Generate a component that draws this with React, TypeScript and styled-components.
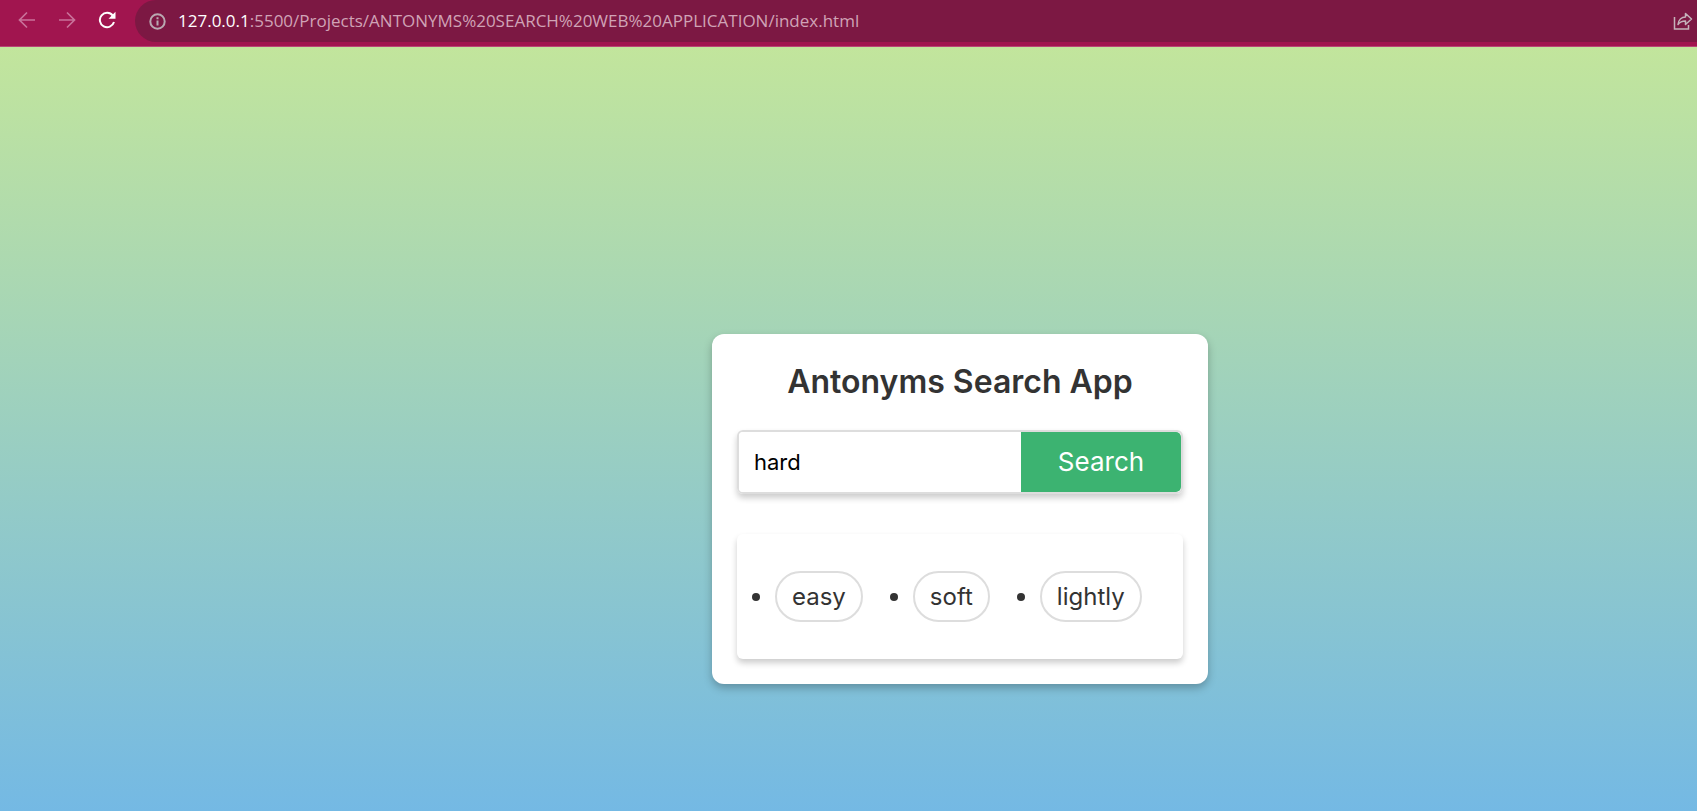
import React, { useState } from "react";
import styled, { createGlobalStyle } from "styled-components";

const GlobalStyle = createGlobalStyle`
  * { box-sizing: border-box; }
  body { margin: 0; }
`;

const Page = styled.div`
  min-height: 100vh;
  display: flex;
  flex-direction: column;
  overflow: hidden;
`;

const BrowserBar = styled.header`
  display: flex;
  align-items: flex-start;
  height: 47px;
  background: #a1154f;
  border-bottom: 1px solid #b84576;
`;

const NavButtons = styled.nav`
  display: flex;
  width: 135px;
  height: 40px;
  padding-left: 7px;
`;

const IconButton = styled.button<{ $dim?: boolean }>`
  display: flex;
  align-items: center;
  justify-content: center;
  width: 40px;
  height: 40px;
  padding: 0;
  border: 0;
  background: none;
  color: ${(p) => (p.$dim ? "#c9729a" : "#ffffff")};
`;

const ShareButton = styled(IconButton)`
  width: 28px;
  color: #c5b2bb;
`;

const AddressBar = styled.div`
  display: flex;
  align-items: center;
  flex: 1;
  height: 42px;
  padding-left: 14px;
  border-radius: 21px 0 0 21px;
  background: #7c1843;
  color: #b9a9b1;
`;

const Url = styled.a`
  flex: 1;
  margin-left: 12px;
  color: #d0a3b6;
  font: 17px/24px "Open Sans", "Noto Sans", sans-serif;
  text-decoration: none;
  white-space: nowrap;
`;

const Host = styled.span`
  color: #ffffff;
`;

const Main = styled.main`
  flex: 1;
  display: flex;
  justify-content: center;
  align-items: flex-start;
  padding: 287px 0 80px 223px;
  background: linear-gradient(to bottom, #c2e59c, #74b9e4);
  color: #333333;
  font-family: Inter, "Open Sans", sans-serif;
`;

const Card = styled.section`
  width: 496px;
  padding: 25px;
  border-radius: 12px;
  background: #ffffff;
  box-shadow: 0 4px 8px rgba(0, 0, 0, 0.25);
`;

const Title = styled.h1`
  margin: 0;
  font-size: 32px;
  line-height: 46px;
  font-weight: 600;
  text-align: center;
`;

const SearchForm = styled.form`
  display: flex;
  height: 64px;
  margin-top: 25px;
  overflow: hidden;
  border: 2px solid #dddddd;
  border-radius: 6px;
  box-shadow: 0 4px 6px rgba(0, 0, 0, 0.2);
`;

const WordInput = styled.input`
  flex: 1;
  min-width: 0;
  padding: 0 15px;
  border: 0;
  outline: 0;
  color: #000000;
  background: #ffffff;
  font: 22px/30px Inter, "Open Sans", sans-serif;
`;

const SearchButton = styled.button`
  width: 160px;
  border: 0;
  border-radius: 0 5px 5px 0;
  background: #3cb371;
  color: #ffffff;
  font: 26px/38px Inter, "Open Sans", sans-serif;
`;

const Results = styled.ul`
  display: flex;
  gap: 50px;
  margin: 40px 0 0;
  padding: 37px 38px;
  border-radius: 6px;
  box-shadow: 0 4px 6px rgba(0, 0, 0, 0.2);
  list-style: none;
`;

const Result = styled.li`
  position: relative;
  height: 51px;
  padding: 0 15px;
  border: 2px solid #dddddd;
  border-radius: 26px;
  font-size: 24px;
  line-height: 47px;

  &::before {
    content: "";
    position: absolute;
    top: 20px;
    left: -25px;
    width: 8px;
    height: 8px;
    border-radius: 50%;
    background: #333333;
  }
`;

const antonyms = ["easy", "soft", "lightly"];

export default function App() {
  const [word, setWord] = useState("hard");
  return (
    <Page>
      <GlobalStyle />
      <BrowserBar>
        <NavButtons aria-label="Browser">
          <IconButton $dim aria-label="Back">
            <svg width="18" height="18" viewBox="0 0 18 18" fill="none" stroke="currentColor" strokeWidth="1.7">
              <path d="M17 9H2M9 1.5 1.5 9 9 16.5" />
            </svg>
          </IconButton>
          <IconButton $dim aria-label="Forward">
            <svg width="18" height="18" viewBox="0 0 18 18" fill="none" stroke="currentColor" strokeWidth="1.7">
              <path d="M1 9h15M9 1.5 16.5 9 9 16.5" />
            </svg>
          </IconButton>
          <IconButton aria-label="Reload">
            <svg width="18" height="18" viewBox="0 0 18 18" fill="none">
              <path d="M14.8 4.6A7.200 7.200 0 1 0 16 11" stroke="currentColor" strokeWidth="2" />
              <path d="M17.500 0.800v7H10.500z" fill="currentColor" />
            </svg>
          </IconButton>
        </NavButtons>
        <AddressBar>
          <svg width="17" height="17" viewBox="0 0 17 17" fill="none" stroke="currentColor" strokeWidth="2">
            <circle cx="8.5" cy="8.5" r="7.2" />
            <path d="M8.5 7.5v5M8.5 4.2v2" />
          </svg>
          <Url href="#">
            <Host>127.0.0.1</Host>:5500/Projects/ANTONYMS%20SEARCH%20WEB%20APPLICATION/index.html
          </Url>
          <ShareButton aria-label="Share">
            <svg width="20" height="18" viewBox="0 0 20 18" fill="none" stroke="currentColor" strokeWidth="1.5">
              <path d="M1.5 5v12h14v-4" />
              <path d="M5 12.5C5.5 8 8.5 5 12.5 5V1.5l6 5.5-6 5.5V9C9 9 6.8 10 5 12.500z" strokeLinejoin="round" />
            </svg>
          </ShareButton>
        </AddressBar>
      </BrowserBar>
      <Main>
        <Card>
          <Title>Antonyms Search App</Title>
          <SearchForm onSubmit={(e) => e.preventDefault()}>
            <WordInput aria-label="Word" value={word} onChange={(e) => setWord(e.target.value)} />
            <SearchButton type="submit">Search</SearchButton>
          </SearchForm>
          <Results>
            {antonyms.map((a) => (
              <Result key={a}>{a}</Result>
            ))}
          </Results>
        </Card>
      </Main>
    </Page>
  );
}
